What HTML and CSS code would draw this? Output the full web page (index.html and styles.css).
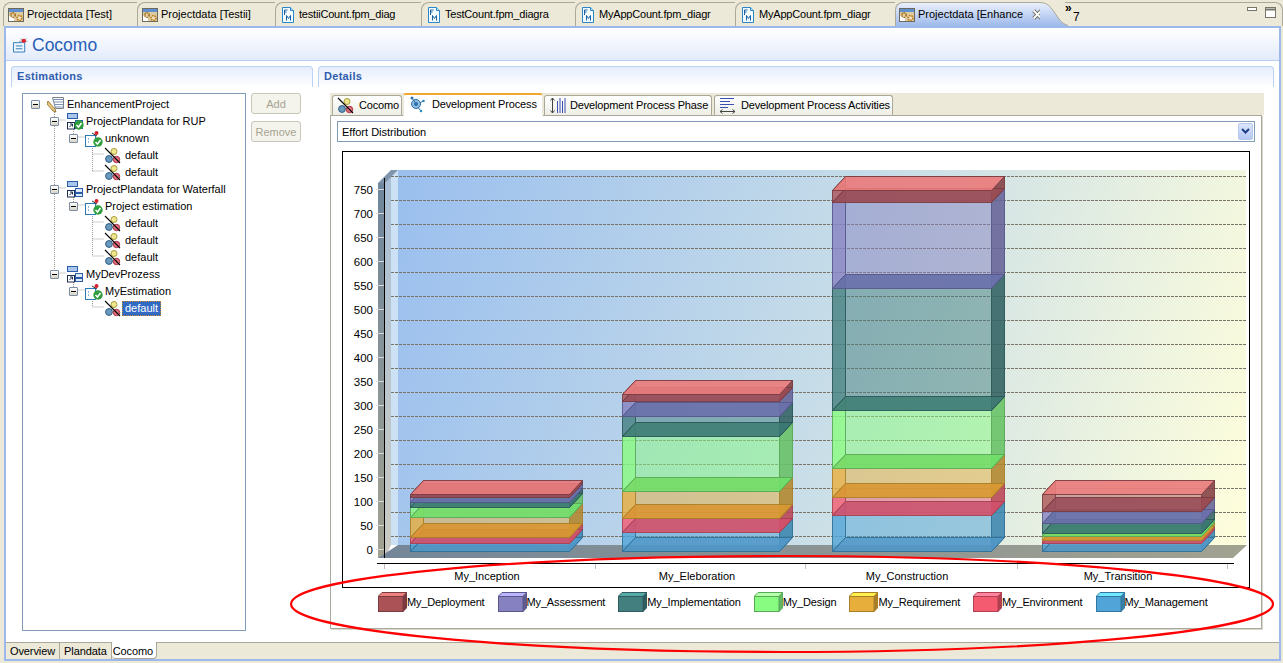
FILE: index.html
```html
<!DOCTYPE html>
<html lang="en">
<head>
<meta charset="utf-8">
<title>Cocomo</title>
<link rel="stylesheet" href="styles.css">
</head>
<body>
<svg class="sprites" width="0" height="0" aria-hidden="true">
  <defs>
    <symbol id="i-editor" viewBox="0 0 16 16">
      <rect x="0.5" y="1.5" width="15" height="13" fill="#dccca0" stroke="#6b6a5c"/>
      <rect x="1" y="2" width="14" height="3" fill="#5f8fd0"/>
      <rect x="1" y="9" width="5" height="5" fill="#fff"/>
      <circle cx="5" cy="8" r="2.2" fill="none" stroke="#a8701e" stroke-width="1.6" stroke-dasharray="1.500 .7"/>
      <circle cx="11.500" cy="11" r="2.400" fill="#f0e6c8" stroke="#c07c20" stroke-width="1.800" stroke-dasharray="1.500 .7"/>
    </symbol>
    <symbol id="i-fm" viewBox="0 0 16 16">
      <path d="M2.5 .5h8l3 3v12h-11z" fill="#f2fbff" stroke="#2a86c8"/>
      <path d="M10.5 .5v3h3" fill="#bfe4f8" stroke="#2a86c8"/>
      <path d="M4.5 3v5M4.5 3h3M4.5 5h2" stroke="#1a5fa0" fill="none"/>
      <path d="M6.5 13.5v-5l2 3 2-3v5" stroke="#1a5fa0" fill="none"/>
    </symbol>
    <symbol id="i-coco" viewBox="0 0 17 17">
      <circle cx="10" cy="4.5" r="3" fill="#efe68e" stroke="#a89c3a"/>
      <circle cx="5" cy="12" r="3.4" fill="#6a9abd" stroke="#2f5c82"/>
      <circle cx="12.5" cy="12.5" r="3.2" fill="#e2707e" stroke="#a8303f"/>
      <path d="M1 1l15 15" stroke="#000" stroke-width="1.1"/>
    </symbol>
    <symbol id="i-project" viewBox="0 0 17 17">
      <path d="M5.5 1.5h11v11h-8z" fill="#fff" stroke="#7a8088"/>
      <path d="M6 3.5h10M7 6h9M7 8.500h9M8 11h8" stroke="#7c93b8"/>
      <path d="M1 5l7 8 1 3-3-1-6-7z" fill="#e8c67c" stroke="#8a6a2a" stroke-width=".8"/>
    </symbol>
    <symbol id="i-plan" viewBox="0 0 17 17">
      <rect x="1.500" y="0.500" width="10" height="5" fill="#a9c6ec" stroke="#2a5ca8"/>
      <rect x="9.500" y="7.500" width="7" height="4" fill="#dce9fa" stroke="#2a5ca8"/>
      <rect x="9.500" y="12.500" width="7" height="3" fill="#dce9fa" stroke="#2a5ca8"/>
      <rect x="1.500" y="9.500" width="7" height="6.500" fill="#fff" stroke="#1d2d50"/>
      <path d="M3.500 14l3-3M4 11h2.500v2.500" stroke="#1d2d50" fill="none"/>
    </symbol>
    <symbol id="i-check" viewBox="0 0 10 10">
      <circle cx="5" cy="5" r="4.700" fill="#2f9e3c"/>
      <path d="M2.500 5l2 2 3-4" stroke="#fff" stroke-width="1.500" fill="none"/>
    </symbol>
    <symbol id="i-est" viewBox="0 0 17 17">
      <rect x="0.500" y="5.500" width="10" height="11" fill="#fff" stroke="#2a7ab8"/>
      <path d="M3 9h1M3 12h1" stroke="#2a7ab8"/>
      <path d="M7 3l5 3" stroke="#333"/>
      <circle cx="11.500" cy="3" r="2" fill="#d8202c"/>
    </symbol>
    <symbol id="i-dev" viewBox="0 0 17 17">
      <circle cx="7" cy="8" r="4.500" fill="#8fbde0" stroke="#2a6ea8"/>
      <circle cx="7" cy="8" r="2" fill="#2a6ea8"/>
      <circle cx="3" cy="2" r="1.500" fill="#2a6ea8"/>
      <circle cx="14.500" cy="5" r="1.300" fill="#2a8ec8"/>
      <circle cx="12" cy="15" r="1.300" fill="#2a8ec8"/>
      <path d="M3 2l3 4M14 5l-3 2M11 14l-2-3" stroke="#2a6ea8"/>
    </symbol>
    <symbol id="i-phase" viewBox="0 0 17 17">
      <path d="M3.500 1v15M1.500 3.500l2-2.500 2 2.500M1.500 13.500l2 2.500 2-2.500" stroke="#444" fill="none"/>
      <path d="M8.500 4v12M11 1v15M13.500 4v12M16 1v15" stroke="#3a4fb0"/>
    </symbol>
    <symbol id="i-activity" viewBox="0 0 17 17">
      <path d="M1 1.500h14M1 4.500h10M1 7.500h14M1 10.500h8" stroke="#3a4fb0"/>
      <path d="M1 14.500h15M3.500 12.500l-2.500 2 2.500 2M13.500 12.500l2.500 2-2.500 2" stroke="#444" fill="none"/>
    </symbol>
    <symbol id="i-form" viewBox="0 0 16 16">
      <path d="M.5 5.500h9l3-2v12h-12z" fill="#eef5fd" stroke="#2a7ab8"/>
      <path d="M3 9h7M3 12h7" stroke="#2a7ab8"/>
      <path d="M8 1l3 3M14 1l-3 3M6.500 4h9" stroke="#999"/>
      <circle cx="11.500" cy="3.500" r="2.300" fill="#e0202c"/>
    </symbol>
    <symbol id="i-swatch" viewBox="0 0 29 20">
      <path d="M0 4.500L4 .5h25l-4 4z" style="fill:var(--top);stroke:var(--line)"/>
      <path d="M25 4.500l4-4v15l-4 4z" style="fill:var(--side);stroke:var(--line)"/>
      <rect x=".5" y="4.500" width="24.500" height="15" style="fill:var(--front);stroke:var(--line)"/>
    </symbol>
  </defs>
</svg>

<div class="editor-tabs">
  <div class="etab etab-1"><svg class="ic16"><use href="#i-editor"/></svg><span>Projectdata [Test]</span></div>
  <div class="etab etab-2"><svg class="ic16"><use href="#i-editor"/></svg><span>Projectdata [Testii]</span></div>
  <div class="etab etab-3 etab-fpm"><svg class="ic16"><use href="#i-fm"/></svg><span>testiiCount.fpm_diag</span></div>
  <div class="etab etab-4 etab-fpm"><svg class="ic16"><use href="#i-fm"/></svg><span>TestCount.fpm_diagra</span></div>
  <div class="etab etab-5 etab-fpm"><svg class="ic16"><use href="#i-fm"/></svg><span>MyAppCount.fpm_diagr</span></div>
  <div class="etab etab-6 etab-fpm"><svg class="ic16"><use href="#i-fm"/></svg><span>MyAppCount.fpm_diagr</span></div>
  <div class="etab etab-active"><svg class="ic16"><use href="#i-editor"/></svg><span>Projectdata [Enhance</span>
    <svg class="close" viewBox="0 0 10 10"><path d="M1.500 1.500l7 7M8.500 1.500l-7 7" stroke="#77746a" stroke-width="3.600"/><path d="M1.500 1.500l7 7M8.500 1.500l-7 7" stroke="#fff" stroke-width="1.800"/></svg>
  </div>
  <svg class="etab-curve" viewBox="0 0 28 24" preserveAspectRatio="none"><defs><linearGradient id="curve-fill" x1="0" y1="0" x2="0" y2="1"><stop offset="0" stop-color="#eaf0fc"/><stop offset="1" stop-color="#9db9eb"/></linearGradient></defs><path d="M0 .5C10 .5 13 9 19 17c3 4 5 5 9 6.500v.5H0z" fill="url(#curve-fill)"/><path d="M0 .5C10 .5 13 9 19 17c3 4 5 5 9 6.500" fill="none" stroke="#aca899"/></svg>
  <div class="more"><span class="more-mark">»</span><span class="more-count">7</span></div>
  <div class="win-ctrl">
    <svg class="win-min" viewBox="0 0 10 5"><rect x=".5" y=".5" width="9" height="3" fill="#fff" stroke="#77746a"/></svg>
    <svg class="win-max" viewBox="0 0 11 11"><rect x=".5" y=".5" width="10" height="10" fill="#fff" stroke="#77746a"/><path d="M1 2.500h9" stroke="#77746a" stroke-width="2"/></svg>
  </div>
</div>

<main class="editor">
  <header class="form-head">
    <svg class="form-icon"><use href="#i-form"/></svg>
    <h1 class="form-title">Cocomo</h1>
  </header>

  <div class="columns">
    <section class="col col-left">
      <h2 class="sec-head">Estimations</h2>
      <div class="sec-body-left">
        <div class="tree">
          <svg class="tree-lines" viewBox="0 0 223 230" width="223" height="230">
            <path d="M31.500 14v165M31.500 26h11M31.500 94h11M31.500 179h11M50.500 33v10M50.500 43h11M50.500 101v10M50.500 111h11M50.500 186v10M50.500 196h11M69.500 50v27M69.500 60h12M69.500 77h12M69.500 118v44M69.500 128h12M69.500 145h12M69.500 162h12M69.500 203v10M69.500 213h12" fill="none" stroke="#9a9a92" stroke-dasharray="1 1"/>
          </svg>
          <div class="row lv0"><i class="tog"></i><svg class="ic17"><use href="#i-project"/></svg><span>EnhancementProject</span></div>
          <div class="row lv1"><i class="tog"></i><span class="stack"><svg class="ic17"><use href="#i-plan"/></svg><svg class="badge"><use href="#i-check"/></svg></span><span>ProjectPlandata for RUP</span></div>
          <div class="row lv2"><i class="tog"></i><span class="stack"><svg class="ic17"><use href="#i-est"/></svg><svg class="badge"><use href="#i-check"/></svg></span><span>unknown</span></div>
          <div class="row lv3"><svg class="ic17"><use href="#i-coco"/></svg><span>default</span></div>
          <div class="row lv3"><svg class="ic17"><use href="#i-coco"/></svg><span>default</span></div>
          <div class="row lv1"><i class="tog"></i><svg class="ic17"><use href="#i-plan"/></svg><span>ProjectPlandata for Waterfall</span></div>
          <div class="row lv2"><i class="tog"></i><span class="stack"><svg class="ic17"><use href="#i-est"/></svg><svg class="badge"><use href="#i-check"/></svg></span><span>Project estimation</span></div>
          <div class="row lv3"><svg class="ic17"><use href="#i-coco"/></svg><span>default</span></div>
          <div class="row lv3"><svg class="ic17"><use href="#i-coco"/></svg><span>default</span></div>
          <div class="row lv3"><svg class="ic17"><use href="#i-coco"/></svg><span>default</span></div>
          <div class="row lv1"><i class="tog"></i><svg class="ic17"><use href="#i-plan"/></svg><span>MyDevProzess</span></div>
          <div class="row lv2"><i class="tog"></i><span class="stack"><svg class="ic17"><use href="#i-est"/></svg><svg class="badge"><use href="#i-check"/></svg></span><span>MyEstimation</span></div>
          <div class="row lv3"><svg class="ic17"><use href="#i-coco"/></svg><span class="selected">default</span></div>
        </div>
        <div class="btns">
          <button class="btn" disabled>Add</button>
          <button class="btn" disabled>Remove</button>
        </div>
      </div>
    </section>

    <section class="col col-right">
      <h2 class="sec-head">Details</h2>
      <div class="tabfolder">
        <div class="itabs">
          <div class="itab itab-coco"><svg class="ic17"><use href="#i-coco"/></svg><span>Cocomo</span></div>
          <div class="itab itab-dev active"><svg class="ic17"><use href="#i-dev"/></svg><span>Development Process</span></div>
          <div class="itab itab-phase"><svg class="ic17"><use href="#i-phase"/></svg><span>Development Process Phase</span></div>
          <div class="itab itab-act"><svg class="ic17"><use href="#i-activity"/></svg><span>Development Process Activities</span></div>
        </div>
        <div class="ipanel">
          <div class="combo"><span class="combo-text">Effort Distribution</span><i class="combo-btn"><svg viewBox="0 0 9 7" width="9" height="7"><path d="M1 1l3.500 3.500L8 1" fill="none" stroke="#1d3f8a" stroke-width="2"/></svg></i></div>
          <div class="chart-box">
            <svg class="chart" viewBox="343 152 906 435" width="906" height="435">
              <defs>
                <linearGradient id="wall" gradientUnits="userSpaceOnUse" x1="398" y1="230" x2="1246" y2="480">
                  <stop offset="0" stop-color="#9cc0ee"/><stop offset=".5" stop-color="#c6dce8"/><stop offset="1" stop-color="#fdfddc"/>
                </linearGradient>
                <linearGradient id="floor" gradientUnits="userSpaceOnUse" x1="384" y1="0" x2="1247" y2="0">
                  <stop offset="0" stop-color="#748698"/><stop offset="1" stop-color="#a2a290"/>
                </linearGradient>
                <linearGradient id="side-dark" x1="0" y1="0" x2="0" y2="1">
                  <stop offset="0" stop-color="#6f869c"/><stop offset="1" stop-color="#a2a292"/>
                </linearGradient>
                <linearGradient id="side-light" x1="0" y1="0" x2="0" y2="1">
                  <stop offset="0" stop-color="#a9bfd6"/><stop offset="1" stop-color="#cacac2"/>
                </linearGradient>
              </defs>
              <path class="wall-back" d="M391 170H1246V545H398z"/>
              <path class="wall-strip" d="M391 170h7V545h-7z"/>
              <path class="wall-dark" d="M378 183h7v375h-7z"/>
              <path class="wall-mid" d="M385 183l6-13v375l-6 13z"/>
              <path class="wall-top" d="M378 183l13-13h7l-13 13z"/>
              <path class="floor" d="M378 558l20-13h849l-14 13z"/>
              <g id="grid"></g>
              <g id="bars"></g>
              <path class="axis" d="M384.500 178v380M377 563.500h857"/>
              <path class="tick" d="M384.500 564v5M595.500 564v5M805.500 564v5M1017.500 564v5M1227.500 564v5"/>
              <path class="ytick" d="M376 549.500h8M376 525.500h8M376 501.500h8M376 477.500h8M376 453.500h8M376 429.500h8M376 405.500h8M376 381.500h8M376 357.500h8M376 333.500h8M376 309.500h8M376 285.500h8M376 261.500h8M376 237.500h8M376 213.500h8M376 189.500h8"/>
              <g class="ylab">
                <text x="373" y="554">0</text><text x="373" y="530">50</text><text x="373" y="506">100</text><text x="373" y="482">150</text>
                <text x="373" y="458">200</text><text x="373" y="434">250</text><text x="373" y="410">300</text><text x="373" y="386">350</text>
                <text x="373" y="362">400</text><text x="373" y="338">450</text><text x="373" y="314">500</text><text x="373" y="290">550</text>
                <text x="373" y="266">600</text><text x="373" y="242">650</text><text x="373" y="218">700</text><text x="373" y="194">750</text>
              </g>
              <g class="xlab">
                <text x="487" y="580">My_Inception</text><text x="697" y="580">My_Eleboration</text>
                <text x="907" y="580">My_Construction</text><text x="1118" y="580">My_Transition</text>
              </g>
            </svg>
          </div>
          <ul class="legend">
            <li class="lg lg-dep"><svg class="swatch"><use href="#i-swatch"/></svg>My_Deployment</li>
            <li class="lg lg-ass"><svg class="swatch"><use href="#i-swatch"/></svg>My_Assessment</li>
            <li class="lg lg-imp"><svg class="swatch"><use href="#i-swatch"/></svg>My_Implementation</li>
            <li class="lg lg-des"><svg class="swatch"><use href="#i-swatch"/></svg>My_Design</li>
            <li class="lg lg-req"><svg class="swatch"><use href="#i-swatch"/></svg>My_Requirement</li>
            <li class="lg lg-env"><svg class="swatch"><use href="#i-swatch"/></svg>My_Environment</li>
            <li class="lg lg-man"><svg class="swatch"><use href="#i-swatch"/></svg>My_Management</li>
          </ul>
        </div>
      </div>
    </section>
  </div>

  <footer class="page-tabs">
    <div class="ptab">Overview</div>
    <div class="ptab">Plandata</div>
    <div class="ptab ptab-active">Cocomo</div>
  </footer>
</main>

<svg class="annotation" viewBox="0 0 1000 110" preserveAspectRatio="none"><ellipse cx="499" cy="55" rx="491" ry="48"/></svg>
<script src="chart.js"></script>
</body>
</html>
```
FILE: styles.css
```css
* { box-sizing: border-box; }
html, body { margin: 0; padding: 0; }
body {
  position: relative;
  width: 1283px;
  height: 663px;
  overflow: hidden;
  background: #ece9d8;
  font: 11px/13px "Liberation Sans", Arial, sans-serif;
  color: #000;
}
.sprites { position: absolute; }
.ic16 { width: 16px; height: 16px; flex: none; }
.ic17 { width: 17px; height: 17px; flex: none; }

/* Editor tab strip */
.editor-tabs {
  display: flex;
  height: 26px;
  padding: 2px 0 0 3px;
  align-items: stretch;
  font-size: 11px;
}
.etab {
  display: flex;
  align-items: center;
  gap: 3px;
  padding: 0 0 0 4px;
  border-left: 1px solid #aca899;
  border-top: 1px solid #aca899;
  border-top-left-radius: 8px;
  white-space: nowrap;
}
.etab-1 { width: 134px; }
.etab-2 { width: 138px; }
.etab-3 { width: 146px; }
.etab-4 { width: 154px; }
.etab-5 { width: 160px; }
.etab-6 { width: 160px; }
.etab-fpm span { letter-spacing: -.2px; }
.etab-active {
  width: 145px;
  padding-left: 3px;
  background: linear-gradient(#eaf0fc, #9db9eb);
}
.close { width: 11px; height: 11px; margin-left: 6px; flex: none; }
.etab-curve { width: 28px; height: 24px; flex: none; }
.more { position: relative; width: 24px; margin-left: -3px; border-top: 1px solid #aca899; }
.more-mark { position: absolute; left: 0; top: -1px; font-size: 12px; line-height: 12px; font-weight: bold; }
.more-count { position: absolute; left: 8px; top: 7px; font-size: 12px; line-height: 14px; }
.win-ctrl {
  flex: 1;
  display: flex;
  justify-content: flex-end;
  align-items: flex-start;
  gap: 8px;
  padding: 4px 6px 0 0;
  border-top: 1px solid #aca899;
  border-right: 1px solid #aca899;
  border-top-right-radius: 8px;
}
.win-min { width: 10px; height: 5px; }
.win-max { width: 11px; height: 11px; }

/* Editor frame */
.editor {
  display: flex;
  flex-direction: column;
  height: 635px;
  margin: 0 2px 0 4px;
  border: 2px solid #9db9eb;
  background: #fff;
}
.form-head {
  display: flex;
  align-items: center;
  gap: 4px;
  height: 33px;
  padding: 1px 0 0 7px;
  background: linear-gradient(#fff, #e3ebfb);
  border-bottom: 1px solid #b5cdf3;
  flex: none;
}
.form-icon { width: 15px; height: 16px; flex: none; }
.form-title { margin: 0; font-size: 17.500px; line-height: 22px; font-weight: normal; color: #2a5fb8; }
.columns { display: flex; flex: 1; min-height: 0; padding: 5px 5px 0 5px; gap: 5px; }
.col { display: flex; flex-direction: column; min-width: 0; }
.col-left { width: 302px; }
.col-right { flex: 1; }
.sec-head {
  height: 21px;
  margin: 0;
  padding: 2px 0 0 5px;
  font-size: 11px;
  line-height: 14px;
  font-weight: bold;
  letter-spacing: .3px;
  color: #2d5cae;
  border: 1px solid #bcd2f5;
  border-bottom: 0;
  border-radius: 4px 4px 0 0;
  background: linear-gradient(#e5edfc, #fff);
}
.sec-body-left { display: flex; gap: 5px; padding: 6px 0 0 11px; }

/* Tree */
.tree {
  position: relative;
  width: 224px;
  height: 538px;
  border: 1px solid #7f9db9;
  background: #fff;
  padding-top: 2px;
}
.tree-lines { position: absolute; left: 0; top: 0; }
.row { position: relative; display: flex; align-items: center; height: 17px; white-space: nowrap; }
.row > span:last-child { margin-left: 3px; }
.lv0 { padding-left: 8px; }
.lv1 { padding-left: 27px; }
.lv2 { padding-left: 46px; }
.lv3 { padding-left: 81px; }
.lv3 > span:last-child { margin-left: 4px; }
.tog {
  position: relative;
  flex: none;
  width: 9px;
  height: 9px;
  margin-right: 7px;
  border: 1px solid #7b8da5;
  border-radius: 1px;
  background: linear-gradient(#fff, #d8d4c4);
}
.tog::after { content: ""; position: absolute; left: 1px; top: 3px; width: 5px; height: 1px; background: #000; }
.stack { position: relative; width: 17px; height: 17px; flex: none; display: block; }
.badge { position: absolute; right: -1px; bottom: 0; width: 10px; height: 10px; }
.lv3 > span.selected {
  padding: 1px 3px;
  margin-left: 1px;
  color: #fff;
  background: #316ac5;
  outline: 1px dotted #c88a20;
  outline-offset: -1px;
}

/* Buttons */
.btns { display: flex; flex-direction: column; gap: 7px; }
.btn {
  width: 50px;
  height: 21px;
  padding: 0;
  font: 11px "Liberation Sans", Arial, sans-serif;
  color: #a6a392;
  background: #f4f3ec;
  border: 1px solid #c9c7ba;
  border-radius: 3px;
}

/* Inner tab folder */
.tabfolder { width: 934px; margin: 6px 0 0 12px; }
.itabs { display: flex; align-items: flex-end; height: 22px; padding-left: 2px; background: #ece9d8; letter-spacing: -.15px; }
.itab {
  display: flex;
  align-items: center;
  gap: 4px;
  height: 20px;
  padding: 0 0 0 4px;
  margin-right: 1px;
  background: linear-gradient(#fff, #eeeee6);
  border: 1px solid #aca899;
  border-bottom: 0;
  border-radius: 3px 3px 0 0;
  white-space: nowrap;
}
.itab-coco { width: 70px; gap: 5px; }
.itab-dev { width: 140px; }
.itab-phase { width: 168px; }
.itab-act { width: 179px; margin-left: 1px; gap: 5px; }
.itab.active {
  position: relative;
  height: 23px;
  padding: 0 0 3px 5px;
  gap: 6px;
  background: #fff;
  border-color: #e8e8e0;
  border-top: 2px solid #f0a830;
  margin-bottom: -1px;
  z-index: 1;
}
.ipanel {
  height: 514px;
  padding: 5px 0 0 6px;
  width: 932px;
  background: #fff;
  border: 1px solid #aca899;
  box-shadow: 1px 1px 0 #d8d8d0;
}
.combo {
  display: flex;
  align-items: center;
  justify-content: space-between;
  width: 918px;
  height: 21px;
  padding: 0 1px 0 4px;
  border: 1px solid #7f9db9;
  background: #fff;
}
.combo-text { padding-top: 1px; }
.combo-btn {
  display: flex;
  align-items: center;
  justify-content: center;
  width: 15px;
  height: 17px;
  background: linear-gradient(#dce6fb, #b4c8f4);
  border: 1px solid #b8c8ea;
  border-radius: 2px;
}
.chart-box {
  width: 908px;
  height: 437px;
  margin: 9px 0 0 5px;
  border: 1px solid #000;
  background: #fff;
}
.chart { display: block; }
.wall-back { fill: url(#wall); }
.wall-strip { fill: #cde1f5; }
.wall-dark { fill: url(#side-dark); }
.wall-mid { fill: url(#side-light); }
.wall-top { fill: #7f95ac; }
.floor { fill: url(#floor); }
.axis { fill: none; stroke: #000; stroke-width: 1; }
.tick { fill: none; stroke: #c0c0c0; }
.ytick { fill: none; stroke: #d8d8d8; }
.grid-line { stroke: #7a7468; stroke-dasharray: 3 1; stroke-width: 1; }
.ylab text { font-size: 11.500px; text-anchor: end; fill: #000; }
.xlab text { font-size: 11px; text-anchor: middle; fill: #000; }

/* Legend */
.legend { display: flex; list-style: none; margin: 4px 0 0 41px; padding: 0; gap: 13px; letter-spacing: -.15px; }
.lg { display: flex; align-items: center; height: 20px; line-height: 15px; white-space: nowrap; }
.swatch { width: 29px; height: 20px; flex: none; }
.lg-dep { --front: #ab5256; --top: #ef8080; --side: #7a3b40; --line: #7a3b40; }
.lg-ass { --front: #8681c0; --top: #b8b4ff; --side: #5f5c90; --line: #5a5888; }
.lg-imp { --front: #447f80; --top: #56aaa8; --side: #2f5c5e; --line: #2f5c5e; }
.lg-des { --front: #88fc80; --top: #b4ffa8; --side: #62b860; --line: #58a858; }
.lg-req { --front: #e8ae3c; --top: #fff04c; --side: #a87f28; --line: #a87f28; }
.lg-env { --front: #f45a70; --top: #ff84a0; --side: #b04050; --line: #b04050; }
.lg-man { --front: #50a4d8; --top: #70e8ff; --side: #3880a8; --line: #3078a0; }

/* Page tabs */
.page-tabs {
  display: flex;
  flex: none;
  height: 17px;
  background: #ece9d8;
  border-top: 1px solid #aca899;
  letter-spacing: -.1px;
}
.ptab {
  display: flex;
  align-items: center;
  padding: 1px 4px 0;
  height: 16px;
  border-right: 1px solid #aca899;
}
.ptab-active {
  width: 45px;
  padding: 2px 0 0 1px;
  height: 17px;
  margin-top: -1px;
  background: #fff;
  border-radius: 0 0 4px 4px;
  border-bottom: 1px solid #aca899;
}

/* Hand-drawn annotation over the legend */
.annotation {
  position: absolute;
  left: 283px;
  top: 549px;
  width: 1000px;
  height: 110px;
  fill: none;
  stroke: #f00;
  stroke-width: 2.200;
  pointer-events: none;
}
```
FILE: chart.js
```js
// Stacked 3D bar chart: every cube is drawn from translucent faces.
const NS = 'http://www.w3.org/2000/svg';
const DX = 13, DY = 14;
const SERIES = [
  { fill: '#4f97c8', back: '#50a4d8', side: '#3880a8', line: '#2f7096' },
  { fill: '#d4506a', back: '#f45a70', side: '#b04050', line: '#a83f50' },
  { fill: '#d89a30', back: '#e8ae3c', side: '#a87f28', line: '#a87f28' },
  { fill: '#6fe06a', back: '#88fc80', side: '#62b860', line: '#58a858' },
  { fill: '#3c7874', back: '#447f80', side: '#2f5c5e', line: '#2a5655' },
  { fill: '#6a70ac', back: '#8681c0', side: '#5f5c90', line: '#56568a' },
  { fill: '#9a4a52', back: '#ab5256', side: '#7a3b40', line: '#7a3b40' }
];
// [left, right, then the front-top of each series, bottom to top]
const BARS = [
  [410, 569, [543, 537, 517, 507, 502, 497, 494]],
  [622, 779, [532, 518, 491, 436, 416, 401, 394]],
  [832, 991, [515, 497, 468, 410, 288, 202, 190]],
  [1042, 1201, [543, 540, 536, 533, 523, 511, 494]]
];
const poly = (parent, pts, fill, opacity, stroke, strokeOpacity) => {
  const p = document.createElementNS(NS, 'polygon');
  p.setAttribute('points', pts.map(q => q.join(',')).join(' '));
  p.setAttribute('fill', fill);
  p.setAttribute('fill-opacity', opacity);
  p.setAttribute('stroke', stroke);
  p.setAttribute('stroke-opacity', strokeOpacity);
  parent.appendChild(p);
};
const grid = document.getElementById('grid');
for (let y = 176.5; y <= 536.5; y += 24) {
  const l = document.createElementNS(NS, 'line');
  l.setAttribute('x1', 391); l.setAttribute('x2', 1246);
  l.setAttribute('y1', y); l.setAttribute('y2', y);
  l.setAttribute('class', 'grid-line');
  grid.appendChild(l);
}
const bars = document.getElementById('bars');
BARS.forEach(([x0, x1, tops]) => {
  let yb = 551;
  tops.forEach((yt, i) => {
    const s = SERIES[i];
    const a = x0 + .5, b = x1 + .5, B = yb + .5, T = yt + .5;
    poly(bars, [[a + DX, T - DY], [b + DX, T - DY], [b + DX, B - DY], [a + DX, B - DY]], s.back, 0.5, s.line, 0.15);
    poly(bars, [[a, B], [a + DX, B - DY], [a + DX, T - DY], [a, T]], s.back, 0.8, s.line, 0.9);
    poly(bars, [[b, B], [b + DX, B - DY], [b + DX, T - DY], [b, T]], s.side, 0.75, s.line, 0.9);
    poly(bars, [[a, B], [b, B], [b + DX, B - DY], [a + DX, B - DY]], s.fill, 0.9, s.line, 0.9);
    if (i === tops.length - 1) {
      poly(bars, [[a, T], [b, T], [b + DX, T - DY], [a + DX, T - DY]], '#ee8080', 0.85, s.line, 0.9);
    }
    yb = yt;
  });
});
```
